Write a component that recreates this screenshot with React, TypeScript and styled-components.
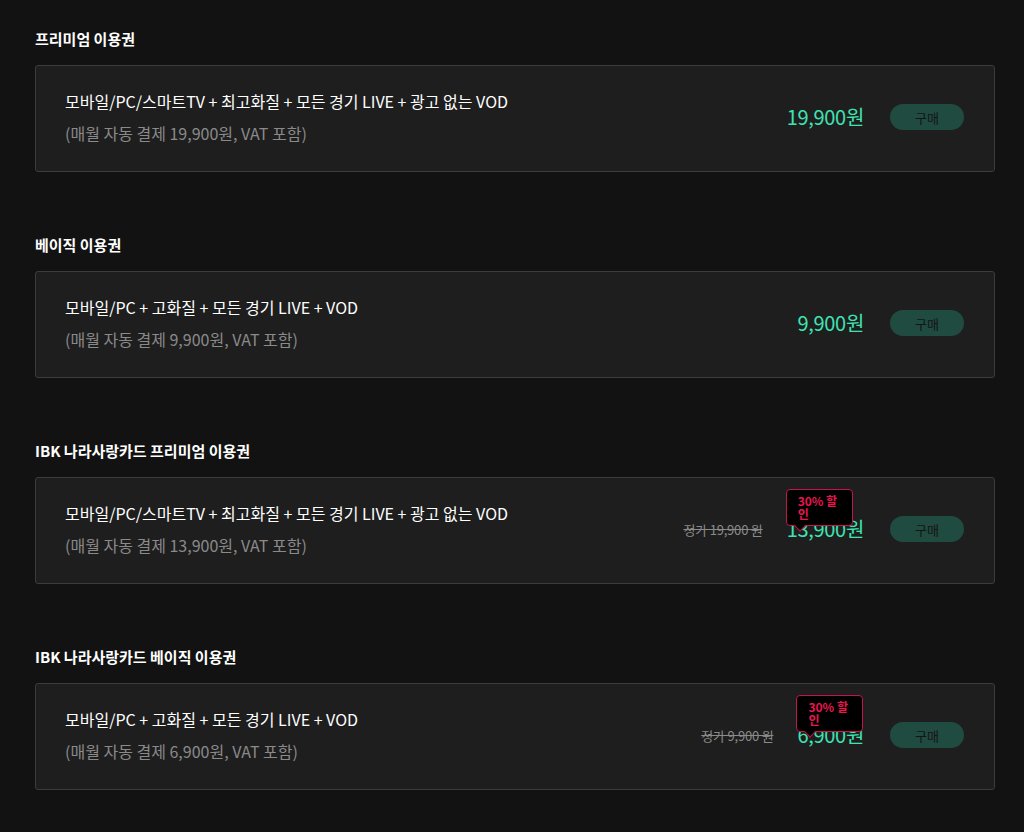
import styled, { createGlobalStyle } from "styled-components";

const GlobalStyle = createGlobalStyle`
  body {
    margin: 0;
    background: #121212;
    font-family: "Noto Sans CJK KR", "Noto Sans", sans-serif;
    color: #fff;
  }
`;

const Page = styled.div`
  padding: 29px 29px 40px 35px;
`;

const Section = styled.section`
  margin-bottom: 63px;
`;

const Title = styled.h2`
  margin: 0 0 16px;
  font-size: 15px;
  line-height: 20px;
  font-weight: 700;
  color: #fff;
`;

const Card = styled.div`
  box-sizing: border-box;
  height: 107px;
  display: flex;
  align-items: center;
  padding: 0 30px 3px 29px;
  background: #1e1e1e;
  border: 1px solid #3c3c3c;
  border-radius: 3px;
`;

const Info = styled.div`
  flex: 1;
  display: flex;
  flex-direction: column;
  gap: 8px;
`;

const Main = styled.div`
  font-size: 16px;
  line-height: 24px;
  color: #fff;
`;

const Sub = styled.div`
  font-size: 16px;
  line-height: 24px;
  color: #8a8a8a;
`;

const OldPrice = styled.span`
  font-size: 13px;
  color: #8a8a8a;
  text-decoration: line-through;
  margin-right: 24px;
  letter-spacing: -0.2px;
`;

const PriceWrap = styled.div`
  position: relative;
`;

const Price = styled.div`
  font-size: 20px;
  line-height: 24px;
  color: #3fe3b3;
  letter-spacing: -0.3px;
`;

const Badge = styled.div`
  position: absolute;
  top: -28px;
  left: -1px;
  box-sizing: border-box;
  width: 67px;
  padding: 4px 10px 5px 11px;
  background: #000;
  border: 1px solid #c4154f;
  border-radius: 4px;
  color: #e8174f;
  font-size: 12px;
  font-weight: 700;
  line-height: 13px;

  &::after {
    content: "";
    position: absolute;
    left: 9px;
    bottom: -5px;
    width: 7px;
    height: 7px;
    background: #000;
    border-right: 1px solid #c4154f;
    border-bottom: 1px solid #c4154f;
    transform: rotate(45deg);
  }
`;

const BuyButton = styled.button`
  margin-left: 26px;
  width: 74px;
  height: 26px;
  border: none;
  border-radius: 13px;
  background: #1f4b40;
  color: #151515;
  font-family: inherit;
  font-size: 13px;
  cursor: pointer;
`;

type Plan = {
  title: string;
  desc: string;
  note: string;
  price: string;
  original?: string;
};

const plans: Plan[] = [
  {
    title: "프리미엄 이용권",
    desc: "모바일/PC/스마트TV + 최고화질 + 모든 경기 LIVE + 광고 없는 VOD",
    note: "(매월 자동 결제 19,900원, VAT 포함)",
    price: "19,900원",
  },
  {
    title: "베이직 이용권",
    desc: "모바일/PC + 고화질 + 모든 경기 LIVE + VOD",
    note: "(매월 자동 결제 9,900원, VAT 포함)",
    price: "9,900원",
  },
  {
    title: "IBK 나라사랑카드 프리미엄 이용권",
    desc: "모바일/PC/스마트TV + 최고화질 + 모든 경기 LIVE + 광고 없는 VOD",
    note: "(매월 자동 결제 13,900원, VAT 포함)",
    price: "13,900원",
    original: "정가 19,900 원",
  },
  {
    title: "IBK 나라사랑카드 베이직 이용권",
    desc: "모바일/PC + 고화질 + 모든 경기 LIVE + VOD",
    note: "(매월 자동 결제 6,900원, VAT 포함)",
    price: "6,900원",
    original: "정가 9,900 원",
  },
];

export default function App() {
  return (
    <>
      <GlobalStyle />
      <Page>
        {plans.map((p) => (
          <Section key={p.title}>
            <Title>{p.title}</Title>
            <Card>
              <Info>
                <Main>{p.desc}</Main>
                <Sub>{p.note}</Sub>
              </Info>
              {p.original && <OldPrice>{p.original}</OldPrice>}
              <PriceWrap>
                {p.original && <Badge>30% 할인</Badge>}
                <Price>{p.price}</Price>
              </PriceWrap>
              <BuyButton>구매</BuyButton>
            </Card>
          </Section>
        ))}
      </Page>
    </>
  );
}
